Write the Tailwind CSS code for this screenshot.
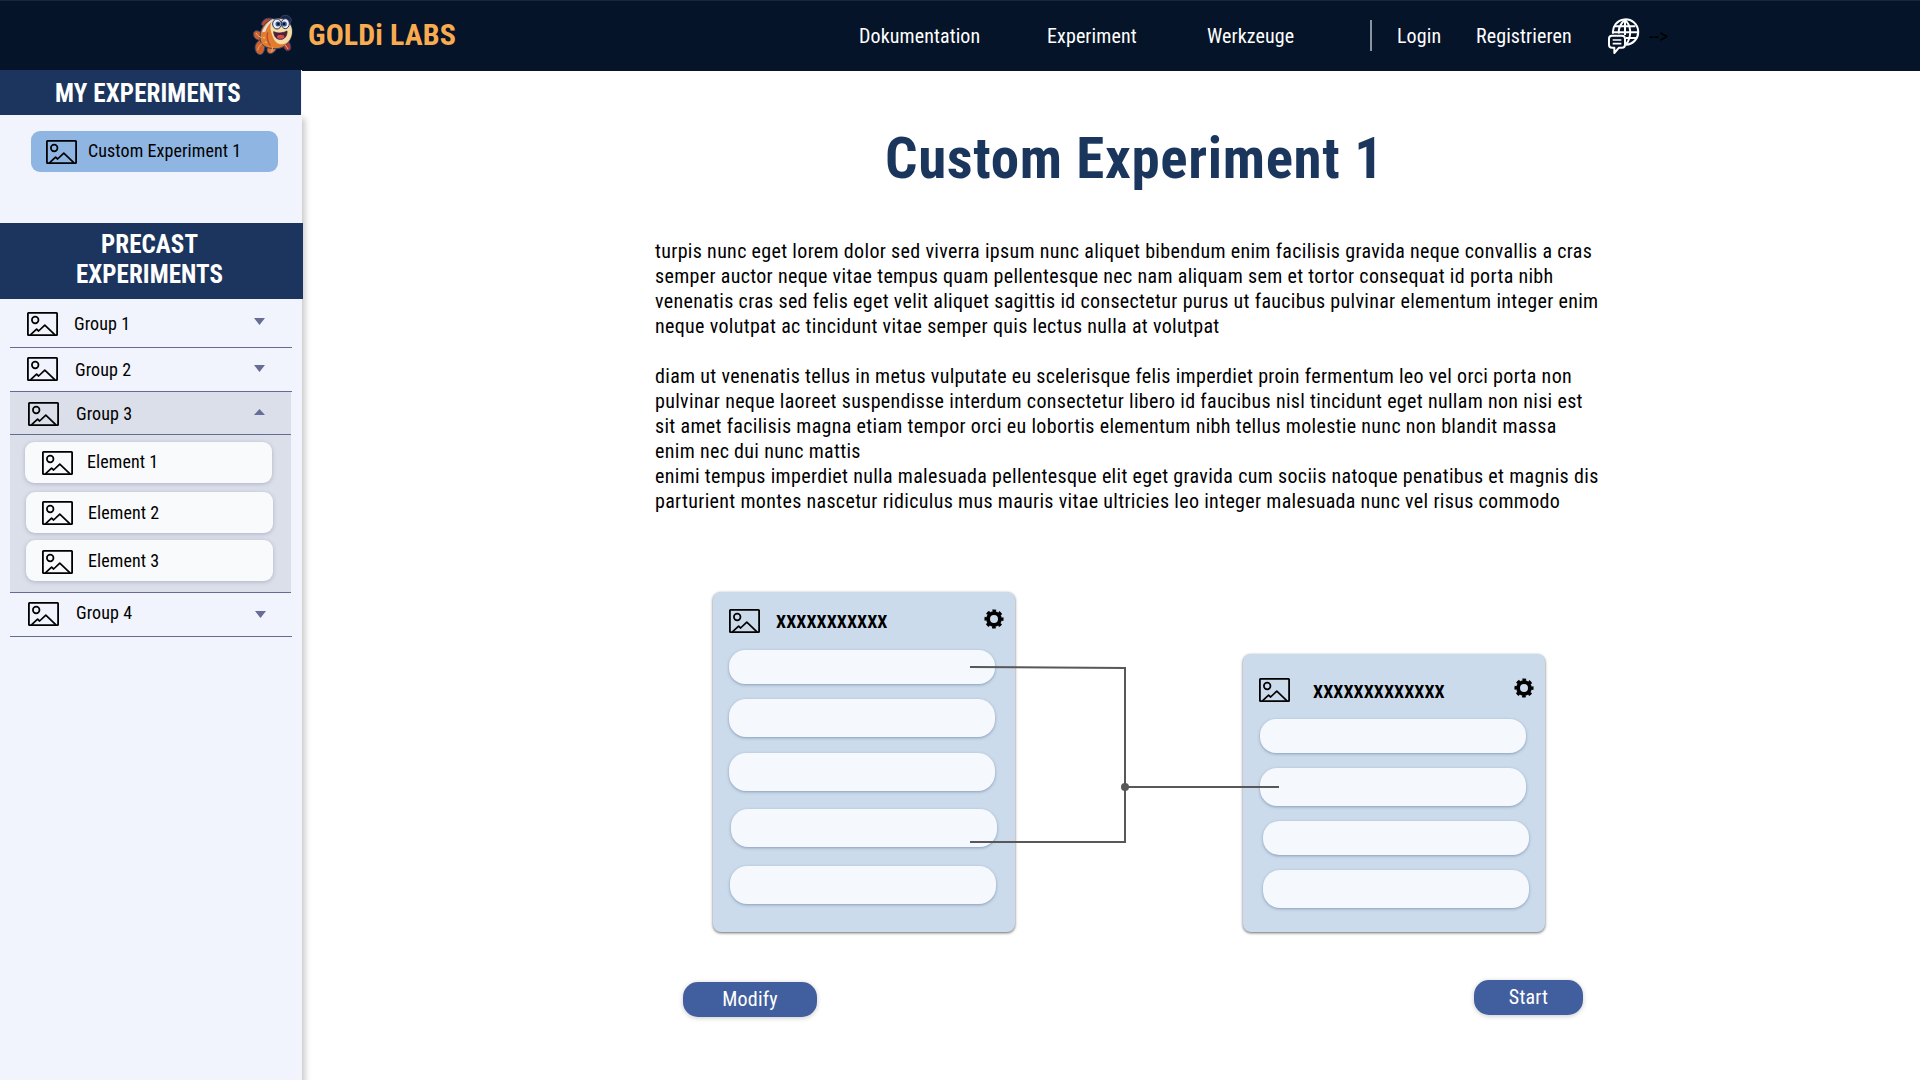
<!DOCTYPE html>
<html lang="de">
<head>
<meta charset="utf-8">
<title>GOLDi Labs</title>
<script src="https://cdn.jsdelivr.net/npm/@tailwindcss/browser@4"></script>
</head>
<body class="flex h-[1080px] w-[1920px] flex-col overflow-hidden bg-white font-['Roboto_Condensed',Roboto,sans-serif] font-stretch-condensed text-black">
<svg class="hidden">
  <symbol id="pic" viewBox="0 0 31 24">
    <g fill="none" stroke="#000" stroke-width="1.8" stroke-linejoin="round">
      <rect x=".9" y=".9" width="29.2" height="22.2" rx=".6"/>
      <circle cx="8.2" cy="8" r="3.3" stroke-width="1.7"/>
      <path d="M3.4 22.8 9.6 17.2 11.6 19 17.8 13.2 28 22.8" stroke-width="1.7"/>
    </g>
  </symbol>
  <symbol id="gear" viewBox="0 0 20 20">
    <circle cx="10" cy="10" r="5.9" fill="none" stroke="#000" stroke-width="3.8"/>
    <circle cx="10" cy="10" r="8.2" fill="none" stroke="#000" stroke-width="2.7" stroke-dasharray="3.6 2.84" stroke-dashoffset="1.8"/>
  </symbol>
</svg>

<header class="flex h-[71px] shrink-0 items-start border-t border-[#1a2737] bg-[#051429] text-xl leading-[70px] tracking-[.1px] text-white">
  <div class="flex w-[858px] items-start pl-[252px]">
    <svg class="mt-3 h-11 w-[42px]" viewBox="0 0 126 132">
      <g stroke="#3a4165" stroke-width="3" stroke-linejoin="round">
        <path d="M34 70C28 52 8 48 5 60c-2 12 6 20 17 22C11 90 6 100 11 114c5 12 16 14 22 6 6-8 7-24 5-34z" fill="#c96230"/>
        <path d="M28 34C32 16 50 12 64 18L44 48z" fill="#b94a30"/>
        <path d="M86 14c8-12 28-8 32 6l-4 12z" fill="#14264c"/>
        <path d="M50 96c-8 12-6 24 4 26 12 0 22-14 22-28z" fill="#dd7430"/>
        <path d="M92 94c4 14 10 22 20 18 8-4 4-22-6-30z" fill="#b63a38"/>
        <path d="M24 72C24 42 46 14 84 17c28 2 38 22 36 44-3 26-24 48-52 46C42 106 24 98 24 72z" fill="#e27c30"/>
      </g>
      <path d="M62 20c32-10 60 9 58 37-1 26-20 41-38 36C66 88 62 72 56 52c-2-10 0-24 6-32z" fill="#f6dda6"/>
      <path d="M62 18c-14 8-26 22-32 40l10-2c5-16 14-28 27-34z" fill="#e9ded8"/>
      <path d="M47 58c-3 14-1 28 8 40" fill="none" stroke="#b94f27" stroke-width="4"/>
      <path d="M12 60c4 7 10 12 18 14M17 112c2-10 7-16 14-21M62 102l-3 16M100 96l8 12" stroke="#f2ab68" stroke-width="3" fill="none"/>
      <ellipse cx="75" cy="33" rx="13" ry="15" fill="#e8edf6" stroke="#26335b" stroke-width="3"/>
      <ellipse cx="100" cy="32" rx="12" ry="15" fill="#e8edf6" stroke="#26335b" stroke-width="3"/>
      <circle cx="78" cy="33" r="7.5" fill="#34548c"/><circle cx="97" cy="33" r="7.5" fill="#34548c"/>
      <circle cx="79" cy="33" r="3.5" fill="#08101f"/><circle cx="96" cy="33" r="3.5" fill="#08101f"/>
      <path d="M65 56c12 6 28 5 40-2 1 14-7 25-19 25-12 1-20-9-21-23z" fill="#571d30" stroke="#36203c" stroke-width="2.5"/>
      <ellipse cx="86" cy="71" rx="11" ry="6" fill="#cf4f58"/>
      <circle cx="36" cy="74" r="2.5" fill="#ffc27c"/><circle cx="42" cy="88" r="2.5" fill="#ffc27c"/>
    </svg>
    <span class="ml-3.5 text-3xl leading-[68px] font-bold text-[#f9ab50]">GOLDi LABS</span>
  </div>
  <nav class="flex">
    <a class="w-[189px] pl-px">Dokumentation</a>
    <a class="w-[160px]">Experiment</a>
    <a class="w-[163px]">Werkzeuge</a>
  </nav>
  <div class="mt-[19px] mr-[25px] h-[31px] w-0.5 bg-[#8b93a0]"></div>
  <a class="w-[79px]">Login</a>
  <a class="w-[131px]">Registrieren</a>
  <svg class="mt-[17px] h-[37px] w-[33px]" viewBox="0 0 99 111" fill="none" stroke="#fff" stroke-width="6">
    <path d="M18 47A38 38 0 1 1 57 80"/>
    <path d="M54 6C38 18 34 34 36 47M54 6c17 14 23 46 3 74M54 6v45M24 25h61M18 43h75M57 60h32"/>
    <path d="M15 53h30q9 0 9 9v18q0 9-9 9H36L22 105V89H15q-9 0-9-9V62q0-9 9-9z" stroke-linejoin="round"/>
    <path d="M17 66h26M17 77h26" stroke-width="5"/>
  </svg>
  <span class="ml-[9px] text-black">--&gt;</span>
</header>

<div class="flex min-h-0 flex-1">
  <aside class="relative -mt-px flex w-[302px] shrink-0 flex-col bg-[#f1f4fc] text-lg leading-6 font-[385] tracking-[.08px]">
    <div class="absolute top-12 right-0 -bottom-4 w-5 shadow-[3px_0_6px_rgba(0,0,0,.22)]"></div>
    <div class="relative flex flex-1 flex-col bg-[#f1f4fc]">
      <h2 class="h-[45px] w-[301px] bg-[#1c355e] pt-0.5 pr-[5px] text-center text-[25px] leading-[43px] font-bold tracking-[.12px] text-white">MY EXPERIMENTS</h2>
      <div class="mt-4 ml-[31px] flex h-[41px] w-[247px] items-start gap-[11px] rounded-[9px] bg-[#8fb5e2] pt-2 pl-[15px]">
        <svg class="mt-px h-6 w-[31px]"><use href="#pic"/></svg>
        <span>Custom Experiment 1</span>
      </div>
      <h2 class="mt-[51px] h-[76px] w-[303px] bg-[#1c355e] pt-[7px] pr-1 text-center text-[25px] leading-[30px] font-bold text-white">PRECAST<br>EXPERIMENTS</h2>
      <ul>
        <li class="ml-2.5 flex h-[49px] w-[282px] items-start border-b border-[#666b96] pt-[13px] pl-[17px]">
          <svg class="h-6 w-[31px]"><use href="#pic"/></svg>
          <span class="ml-4 w-[180px]">Group 1</span>
          <svg class="mt-1.5 h-[7px] w-[11px]" viewBox="0 0 11 7"><path d="M0 0h11L5.5 7z" fill="#686d98"/></svg>
        </li>
        <li class="ml-2.5 flex h-11 w-[282px] items-start border-b border-[#666b96] pt-[9px] pl-[17px]">
          <svg class="h-6 w-[31px]"><use href="#pic"/></svg>
          <span class="mt-px ml-[17px] w-[179px]">Group 2</span>
          <svg class="mt-2 h-[7px] w-[11px]" viewBox="0 0 11 7"><path d="M0 0h11L5.5 7z" fill="#686d98"/></svg>
        </li>
        <li class="ml-2.5 w-[281px] border-b border-[#666b96] bg-[#dbdfea]">
          <div class="flex h-[43px] items-start border-b border-[#666b96] pt-2.5 pl-[18px]">
            <svg class="h-6 w-[31px]"><use href="#pic"/></svg>
            <span class="ml-[17px] w-[178px]">Group 3</span>
            <svg class="mt-[7px] h-1.5 w-[11px]" viewBox="0 0 11 6"><path d="M0 6h11L5.5 0z" fill="#686d98"/></svg>
          </div>
          <ul class="flex h-[157px] flex-col pt-[7px] pl-4">
            <li class="-ml-px flex h-[41px] w-[247px] items-start rounded-[9px] bg-[#f9fafc] pt-2 pl-[17px] shadow-[0_1px_4px_rgba(60,65,100,.28)]">
              <svg class="mt-px h-6 w-[31px]"><use href="#pic"/></svg><span class="ml-3.5">Element 1</span>
            </li>
            <li class="mt-[9px] flex h-[41px] w-[247px] items-start rounded-[9px] bg-[#f9fafc] pt-[9px] pl-4 shadow-[0_1px_4px_rgba(60,65,100,.28)]">
              <svg class="h-6 w-[31px]"><use href="#pic"/></svg><span class="ml-[15px]">Element 2</span>
            </li>
            <li class="mt-[7px] flex h-[41px] w-[247px] items-start rounded-[9px] bg-[#f9fafc] pt-[9px] pl-4 shadow-[0_1px_4px_rgba(60,65,100,.28)]">
              <svg class="mt-px h-6 w-[31px]"><use href="#pic"/></svg><span class="ml-[15px]">Element 3</span>
            </li>
          </ul>
        </li>
        <li class="ml-2.5 flex h-11 w-[282px] items-start border-b border-[#666b96] pt-2 pl-[18px]">
          <svg class="mt-px h-6 w-[31px]"><use href="#pic"/></svg>
          <span class="ml-[17px] w-[179px]">Group 4</span>
          <svg class="mt-[10px] h-[7px] w-[11px]" viewBox="0 0 11 7"><path d="M0 0h11L5.5 7z" fill="#686d98"/></svg>
        </li>
      </ul>
    </div>
  </aside>

  <main class="flex flex-1 flex-col">
    <h1 class="mt-[51px] ml-[583px] text-[57px] leading-[74px] font-bold tracking-[.65px] whitespace-nowrap text-[#1b365d]">Custom Experiment 1</h1>
    <div class="mt-[43px] ml-[353px] text-xl leading-[25px] tracking-[.325px] whitespace-nowrap">
      <p>turpis nunc eget lorem dolor sed viverra ipsum nunc aliquet bibendum enim facilisis gravida neque convallis a cras<br>semper auctor neque vitae tempus quam pellentesque nec nam aliquam sem et tortor consequat id porta nibh<br>venenatis cras sed felis eget velit aliquet sagittis id consectetur purus ut faucibus pulvinar elementum integer enim<br>neque volutpat ac tincidunt vitae semper quis lectus nulla at volutpat</p>
      <p class="mt-[25px]">diam ut venenatis tellus in metus vulputate eu scelerisque felis imperdiet proin fermentum leo vel orci porta non<br>pulvinar neque laoreet suspendisse interdum consectetur libero id faucibus nisl tincidunt eget nullam non nisi est<br>sit amet facilisis magna etiam tempor orci eu lobortis elementum nibh tellus molestie nunc non blandit massa<br>enim nec dui nunc mattis<br>enimi tempus imperdiet nulla malesuada pellentesque elit eget gravida cum sociis natoque penatibus et magnis dis<br>parturient montes nascetur ridiculus mus mauris vitae ultricies leo integer malesuada nunc vel risus commodo</p>
    </div>

    <div class="relative mt-[78px] ml-[411px] h-[341px] w-[833px]">
      <section class="absolute top-0 left-0 flex h-[340px] w-[302px] flex-col rounded-lg bg-[#cbdbeb] pl-4 shadow-[0_1px_3px_rgba(0,0,0,.6)]">
        <div class="flex h-[58px] items-start pt-[17px]">
          <svg class="h-6 w-[31px]"><use href="#pic"/></svg>
          <span class="ml-4 w-52 text-lg leading-[26px] font-bold tracking-[.06px]">XXXXXXXXXXX</span>
          <svg class="h-5 w-5"><use href="#gear"/></svg>
        </div>
        <div class="h-[34px] w-[266px] rounded-[16px] bg-[#f5f8fd] shadow-[0_1px_3px_rgba(70,95,135,.5)]"></div>
        <div class="mt-[15px] h-[38px] w-[266px] rounded-[17px] bg-[#f5f8fd] shadow-[0_1px_3px_rgba(70,95,135,.5)]"></div>
        <div class="mt-4 h-[38px] w-[266px] rounded-[17px] bg-[#f5f8fd] shadow-[0_1px_3px_rgba(70,95,135,.5)]"></div>
        <div class="mt-[18px] ml-0.5 h-[38px] w-[266px] rounded-[17px] bg-[#f5f8fd] shadow-[0_1px_3px_rgba(70,95,135,.5)]"></div>
        <div class="mt-[19px] ml-px h-[38px] w-[266px] rounded-[17px] bg-[#f5f8fd] shadow-[0_1px_3px_rgba(70,95,135,.5)]"></div>
      </section>
      <section class="absolute top-[62px] left-[530px] flex h-[278px] w-[302px] flex-col rounded-lg bg-[#cbdbeb] pl-[17px] shadow-[0_1px_3px_rgba(0,0,0,.6)]">
        <div class="flex h-[65px] items-start pt-6">
          <svg class="-ml-px h-6 w-[31px]"><use href="#pic"/></svg>
          <span class="mt-px ml-[23px] w-[201px] text-lg leading-[26px] font-bold tracking-[.06px]">XXXXXXXXXXXXX</span>
          <svg class="h-5 w-5"><use href="#gear"/></svg>
        </div>
        <div class="h-[34px] w-[266px] rounded-[16px] bg-[#f5f8fd] shadow-[0_1px_3px_rgba(70,95,135,.5)]"></div>
        <div class="mt-[15px] h-[38px] w-[266px] rounded-[17px] bg-[#f5f8fd] shadow-[0_1px_3px_rgba(70,95,135,.5)]"></div>
        <div class="mt-[15px] ml-[3px] h-[34px] w-[266px] rounded-[16px] bg-[#f5f8fd] shadow-[0_1px_3px_rgba(70,95,135,.5)]"></div>
        <div class="mt-[15px] ml-[3px] h-[38px] w-[266px] rounded-[17px] bg-[#f5f8fd] shadow-[0_1px_3px_rgba(70,95,135,.5)]"></div>
      </section>
      <svg class="absolute inset-0 h-[341px] w-[833px]" viewBox="0 0 833 341" fill="none" stroke="#585858" stroke-width="2">
        <path d="M257 75 412 76V250H257M412 195H566"/>
        <circle cx="412" cy="195" r="4" fill="#585858" stroke="none"/>
      </svg>
    </div>

    <div class="mt-[47px] ml-[381px] flex w-[900px] items-start justify-between text-xl tracking-[.2px] text-white">
      <button class="mt-0.5 h-[35px] w-[134px] rounded-[15px] bg-[#415f9e] pb-px leading-[34px] shadow-[0_1px_5px_rgba(0,0,0,.22)]">Modify</button>
      <button class="h-[35px] w-[109px] rounded-[15px] bg-[#415f9e] pb-px leading-[34px] shadow-[0_1px_5px_rgba(0,0,0,.22)]">Start</button>
    </div>
  </main>
</div>
</body>
</html>
